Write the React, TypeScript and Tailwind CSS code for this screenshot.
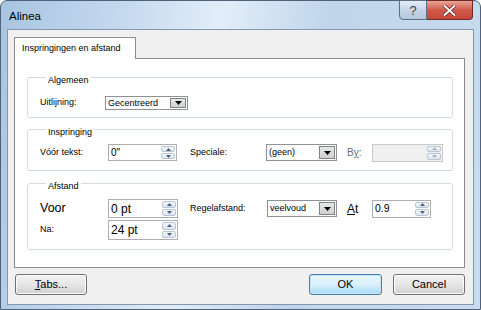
import React from 'react'

const Arrow = ({ up, color = '#4c607a' }: { up?: boolean; color?: string }) => (
  <svg width="5" height="3" viewBox="0 0 5 3">
    <path d={up ? 'M0 3L2.5 0L5 3Z' : 'M0 0L2.5 3L5 0Z'} fill={color} />
  </svg>
)

const Spinner = ({ disabled }: { disabled?: boolean }) => (
  <div className='flex flex-col w-[15px] h-full py-[1px] pr-[1px] gap-[1px]'>
    <div className='flex-1 flex items-center justify-center rounded-[2px] border border-[#bcc6d2] bg-gradient-to-b from-[#f4f7fa] to-[#dce4ed]'>
      <Arrow up color={disabled ? '#a9b2bd' : '#4c607a'} />
    </div>
    <div className='flex-1 flex items-center justify-center rounded-[2px] border border-[#bcc6d2] bg-gradient-to-b from-[#f4f7fa] to-[#dce4ed]'>
      <Arrow color={disabled ? '#a9b2bd' : '#4c607a'} />
    </div>
  </div>
)

type NumProps = { value?: string; className?: string; textClass?: string; disabled?: boolean }

const NumInput = ({ value = '', className = '', textClass = 'text-[9px]', disabled }: NumProps) => (
  <div className={`flex items-stretch border ${disabled ? 'border-[#c9c9c9] bg-[#f0f0f0]' : 'border-[#abadb3] bg-white'} ${className}`}>
    <div className={`flex-1 flex items-center pl-[2px] text-black leading-none ${textClass}`}>{value}</div>
    <Spinner disabled={disabled} />
  </div>
)

const Select = ({ value, className = '' }: { value: string; className?: string }) => (
  <div className={`flex items-stretch border border-[#8e9196] bg-white ${className}`}>
    <div className='flex-1 flex items-center pl-[2px] text-[9px] leading-none text-black'>{value}</div>
    <div className='my-[1px] mr-[1px] w-[16px] flex items-center justify-center border border-[#7f8388] bg-gradient-to-b from-[#e9e9e9] to-[#cfcfcf]'>
      <svg width="7" height="4" viewBox="0 0 7 4"><path d="M0 0H7L3.5 4Z" fill="#000" /></svg>
    </div>
  </div>
)

const Group = ({ title, children, className = '' }: { title: string; children: React.ReactNode; className?: string }) => (
  <fieldset className={`w-[426px] border border-[#d5dadf] rounded-[3px] pl-[12px] ${className}`}>
    <legend className='ml-[6px] px-[2px] pt-[6px] text-[9px] leading-[11px] text-black'>{title}</legend>
    {children}
  </fieldset>
)

const WinButton = ({ children, primary, className = '' }: { children: React.ReactNode; primary?: boolean; className?: string }) => (
  <button
    className={`h-[21px] rounded-[3px] border text-[11px] text-black leading-none flex items-center justify-center
      ${primary
        ? 'border-[#3c7fb1] bg-gradient-to-b from-[#eaf6fd] via-[#d9f0fc] to-[#a7d9f5] shadow-[inset_0_0_0_1px_#c9e6f7]'
        : 'border-[#707070] bg-gradient-to-b from-[#f2f2f2] via-[#e6e6e6] to-[#cfcfcf] shadow-[inset_0_0_0_1px_#fcfcfc]'} ${className}`}
  >
    {children}
  </button>
)

export default function App() {
  return (
    <div className="w-[481px] h-[310px] flex flex-col rounded-t-[7px] border border-[#4f6279] font-['Liberation_Sans',Arial,sans-serif] bg-[linear-gradient(100deg,#a8c4e2_0%,#c3d8ee_22%,#e2edf8_42%,#c0d5eb_62%,#c9dcef_100%)]">
      <div className='h-[28px] flex items-start justify-between'>
        <div className='pl-[8px] pt-[9px] text-[11.5px] leading-[13px] text-black'>Alinea</div>
        <div className='flex mr-[7px] -mt-px'>
          <div className='w-[28px] h-[20px] flex items-center justify-center rounded-bl-[4px] border border-[#5b6e86] bg-gradient-to-b from-[#e4ecf5] via-[#c6d6e8] to-[#b3c7de] text-[13px] leading-none text-[#3a3f46]'>?</div>
          <div className='w-[46px] h-[20px] flex items-center justify-center rounded-br-[4px] border border-l-0 border-[#6d2a24] bg-gradient-to-b from-[#e8a597] via-[#cf5a4a] to-[#c8463a]'>
            <svg width="13" height="11" viewBox="0 0 13 11">
              <path d="M1.5 1L11.5 10M11.5 1L1.5 10" stroke="#5a1f19" strokeWidth="3.4" strokeLinecap="round" />
              <path d="M1.5 1L11.5 10M11.5 1L1.5 10" stroke="#fff" strokeWidth="2" strokeLinecap="round" />
            </svg>
          </div>
        </div>
      </div>

      <div className='mx-[6px] mb-[4px] flex-1 flex flex-col bg-[#f0f0f0] border border-[#8397ae] pl-[6px] pt-[7px]'>
        <div className='w-[122px] h-[22px] -mb-px relative z-10 border border-b-0 border-[#898c95] bg-white flex items-center pl-[7px] text-[9px] text-black'>
          Inspringingen en afstand
        </div>
        <div className='w-[451px] h-[210px] border border-[#898c95] bg-white pl-[12px] pt-[10px] flex flex-col'>
          <Group title='Algemeen'>
            <div className='flex items-center h-[14px] mt-[10px] mb-[7px]'>
              <span className='w-[65px] text-[9px] text-black'>Uitlijning:</span>
              <Select value='Gecentreerd' className='w-[83px] h-[14px]' />
            </div>
          </Group>

          <Group title='Inspringing' className='mt-[3px]'>
            <div className='flex items-center h-[17px] mt-[6px] mb-[9px]'>
              <span className='w-[68px] text-[9px] text-black'>Vóór tekst:</span>
              <NumInput value='0"' className='w-[69px] h-[17px]' textClass='text-[10px]' />
              <span className='ml-[13px] w-[76px] text-[9px] text-black'>Speciale:</span>
              <Select value='(geen)' className='w-[71px] h-[17px]' />
              <span className='ml-[10px] w-[25px] text-[10px] text-[#6d6d6d]'>B<u>y</u>:</span>
              <NumInput disabled className='w-[71px] h-[18px]' />
            </div>
          </Group>

          <Group title='Afstand' className='mt-[4px]'>
            <div className='flex items-center h-[19px] mt-[7px]'>
              <span className='w-[68px] text-[12.5px] text-black'>Voor</span>
              <NumInput value='0 pt' className='w-[70px] h-[19px]' textClass='text-[12px]' />
              <span className='ml-[12px] w-[77px] text-[9px] text-black'>Regelafstand:</span>
              <Select value='veelvoud' className='w-[70px] h-[17px]' />
              <span className='ml-[10px] w-[25px] text-[12px] text-black'><u>A</u>t</span>
              <NumInput value='0.9' className='w-[59px] h-[18px]' textClass='text-[10.5px]' />
            </div>
            <div className='flex items-center h-[20px] mt-[2px] mb-[9px]'>
              <span className='w-[68px] text-[9px] text-black'>Na:</span>
              <NumInput value='24 pt' className='w-[70px] h-[20px]' textClass='text-[12px]' />
            </div>
          </Group>
        </div>

        <div className='flex items-center mt-[6px] pl-px'>
          <WinButton className='w-[72px]'><span><u>T</u>abs...</span></WinButton>
          <WinButton primary className='w-[73px] ml-[222px]'>OK</WinButton>
          <WinButton className='w-[72px] ml-[11px]'>Cancel</WinButton>
        </div>
      </div>
    </div>
  )
}
